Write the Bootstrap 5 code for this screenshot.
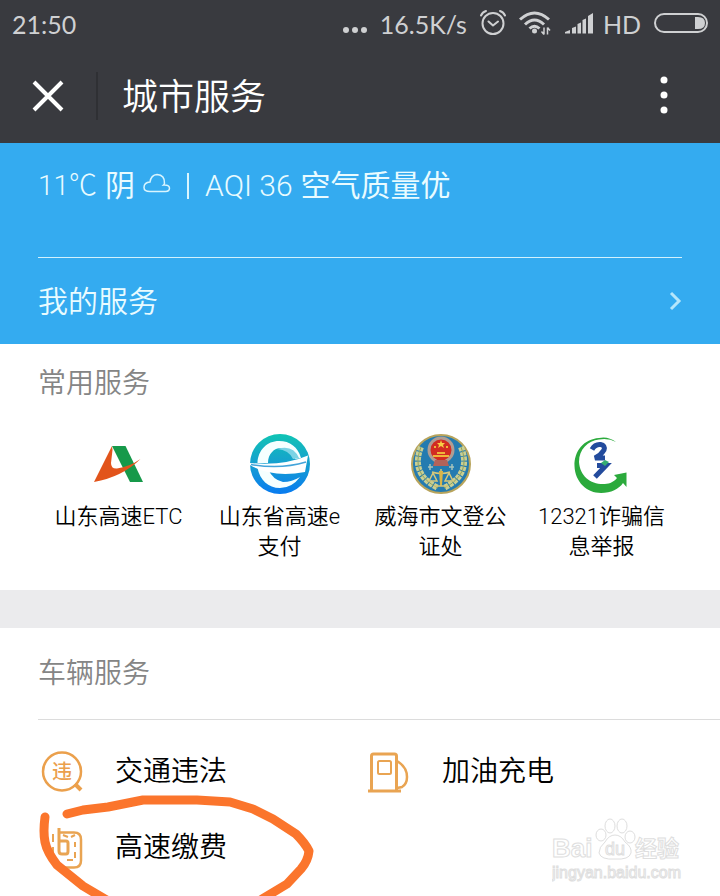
<!DOCTYPE html>
<html lang="zh-CN">
<head>
<meta charset="utf-8">
<meta name="viewport" content="width=device-width, initial-scale=1">
<title>城市服务</title>
<link href="https://cdn.jsdelivr.net/npm/bootstrap@5.3.0/dist/css/bootstrap.min.css" rel="stylesheet">
<style>
  body { font-family: Roboto, "Noto Sans CJK SC", sans-serif; font-weight: 350; color: #000; background: #fff; }
  svg { display: block; flex-shrink: 0; }
  .top-area { background: #393a3f; color: #fff; }
  .status-bar { height: 48px; padding: 0 12px; gap: 13px; font-family: Lato, sans-serif; font-size: 25px; font-weight: 400; line-height: 48px; color: #cfd0d2; }
  .title-bar { height: 95px; padding: 0 36px 0 32px; }
  .title-bar h1 { font-size: 36px; line-height: 44px; font-weight: 350; padding: 4px 0 0 24px; border-left: 2px solid #2f3034; }
  .icon-btn { background: none; border: 0; padding: 0; color: inherit; }
  .close-btn { width: 64px; }
  .blue-area { background: #34abf0; color: #e9fbff; padding: 0 38px; }
  .weather { height: 115px; padding-top: 22px; font-size: 28px; font-weight: 300; line-height: 42px; border-bottom: 1px solid #d3f1fd; }
  .weather .han { font-size: 30px; font-weight: 400; }
  .weather .aqi { font-size: 30px; }
  .weather .split { width: 2px; height: 26px; background: #d9f5fe; }
  .my-service { height: 86px; font-size: 30px; color: inherit; }
  .section-title { font-size: 28px; line-height: 42px; font-weight: 350; color: #858585; }
  .common { padding: 19px 38px 28px; }
  .common .tile { padding: 29px 12px 0; font-size: 22px; line-height: 30px; color: #000; }
  .gap-band { height: 38px; background: #ebebed; }
  .vehicle-head { padding: 25px 0 24px; margin-left: 38px; border-bottom: 1px solid #dcdcdc; }
  .vehicle-list { padding: 14px 28px 0 38px; }
  .vehicle-list .entry { height: 76px; font-size: 28px; color: #000; gap: 29px; }
  .hand-circle { left: 0; top: 12px; pointer-events: none; }
  .watermark { right: 36px; bottom: 12px; pointer-events: none; }
</style>
<script src="https://cdn.jsdelivr.net/npm/bootstrap@5.3.0/dist/js/bootstrap.bundle.min.js"></script>
</head>
<body class="min-vh-100 d-flex flex-column">

<header class="top-area">
  <div class="status-bar d-flex align-items-center">
    <span class="me-auto">21:50</span>
    <svg width="24" height="48" viewBox="0 0 24 48" fill="#cfd0d2"><circle cx="3" cy="30" r="3"/><circle cx="12" cy="30" r="3"/><circle cx="21" cy="30" r="3"/></svg>
    <span>16.5K/s</span>
    <svg width="26" height="48" viewBox="0 0 26 48" fill="none" stroke="#cfd0d2" stroke-width="2" stroke-linecap="round" stroke-linejoin="round"><circle cx="13" cy="23.500" r="10.500"/><path d="M8.500 21.500l4.500 4 5-4M1 15.500q1.500-3.500 5-4.500M25 15.500q-1.500-3.500-5-4.500"/></svg>
    <svg width="32" height="48" viewBox="0 0 32 48" fill="none" stroke="#cfd0d2" stroke-width="3"><path d="M1 19.500q14.500-13 29 0M6 24.500q9.500-9 19 0M10.500 28.500q5-4.500 10 0"/><circle cx="15.500" cy="31" r="2.500" fill="#cfd0d2" stroke="none"/><path stroke-width="1.500" d="M25 27.500v7M28.500 27.500v7M22.500 31.500l2.500 3M31 30.500l-2.500-3"/></svg>
    <span class="d-flex gap-2">
      <svg width="31" height="48" viewBox="0 0 31 48" fill="#cfd0d2"><path d="M1 33.500V32l5-2v3.500zM8 33.500V28l4-1.500v7zM13.500 33.500V24l3.500-1.500v11zM18.500 33.500V20l3.500-1.500v15zM24 33.500V16l5-3v20.500z"/></svg>
      <span>HD</span>
    </span>
    <svg width="54" height="48" viewBox="0 0 54 48"><rect x="1" y="14" width="52" height="18" rx="9" fill="none" stroke="#cfd0d2" stroke-width="2"/><path d="M41 17h3q7 0 7 6t-7 6h-3z" fill="#cfd0d2"/></svg>
  </div>
  <div class="title-bar d-flex align-items-center">
    <button class="icon-btn close-btn" type="button" aria-label="关闭">
      <svg width="32" height="32" viewBox="0 0 32 32" stroke="#fff" stroke-width="4"><path d="M2 2l28 28M30 2L2 30"/></svg>
    </button>
    <h1 class="m-0 me-auto">城市服务</h1>
    <button class="icon-btn" type="button" aria-label="更多">
      <svg width="40" height="40" viewBox="0 0 40 40" fill="#fff"><circle cx="20" cy="4" r="3.500"/><circle cx="20" cy="19" r="3.500"/><circle cx="20" cy="34" r="3.500"/></svg>
    </button>
  </div>
</header>

<section class="blue-area">
  <div class="weather d-flex align-items-start">
    <span>11℃</span>
    <span class="han ms-2">阴</span>
    <svg class="ms-2" width="28" height="42" viewBox="0 0 28 42" fill="none" stroke="#d9f5fe" stroke-width="1.500"><path d="M7 26.500q-6 0-6-4 0-5 6-5.500Q8 10 14 9.500q8 .5 7.500 9-.5 1-1 1.500 5.500-.5 6 3 0 3.500-4 3.500z"/></svg>
    <span class="split align-self-start mt-2 ms-3 me-3"></span>
    <span class="aqi">AQI 36</span>
    <span class="han ms-2">空气质量优</span>
  </div>
  <a class="my-service d-flex align-items-center justify-content-between text-decoration-none" href="#">
    <span>我的服务</span>
    <svg width="14" height="20" viewBox="0 0 14 20" fill="none" stroke="#b5e6fb" stroke-width="3"><path d="M3 2l8 8-8 8"/></svg>
  </a>
</section>

<section class="common">
  <h2 class="section-title m-0">常用服务</h2>
  <div class="row row-cols-4 g-0 text-center">
    <a class="col tile text-decoration-none" href="#">
      <svg class="mx-auto mb-2" width="60" height="60" viewBox="0 0 60 60"><path d="M23 12h13.500L54 48H41z" fill="#16994a"/><path d="M23 12L5 48Q33 43 51.500 25 40 33 28 34.500 22 35 22 29L23.500 16z" fill="#e2541b"/></svg>
      山东高速ETC
    </a>
    <a class="col tile text-decoration-none" href="#">
      <svg class="mx-auto mb-2" width="60" height="60" viewBox="0 0 60 60"><defs><linearGradient id="sea" x1="0" y1="0" x2="0" y2="1"><stop offset="0" stop-color="#10c4b4"/><stop offset=".5" stop-color="#169fd0"/><stop offset="1" stop-color="#087bf0"/></linearGradient></defs><circle cx="30" cy="30" r="30" fill="url(#sea)"/><path d="M7.500 29C8 16 17 7 29 7c11 0 19 6 22 17l-6 1C42 18 37 14 31 14c-7 0-13 6-13 15z" fill="#f5ffff"/><path d="M27 15q16-5 22 9l-6 1q-4-9-16-10z" fill="#7bd3e5"/><path d="M7.500 34C10 46 18 54 30 54q12 0 20-11-8 5-17 5-10-2-15-13z" fill="#f5ffff"/><path d="M0 29q34 3 58-7.500L55 38Q22 44 0 31z" fill="#fff"/><path d="M1 30.500q30 5 55-2.500" fill="none" stroke="#43a4da" stroke-width="1.500"/></svg>
      山东省高速e支付
    </a>
    <a class="col tile text-decoration-none" href="#">
      <svg class="mx-auto mb-2" width="60" height="60" viewBox="0 0 60 60"><circle cx="30" cy="30" r="29" fill="#247bb0" stroke="#b8a45c" stroke-width="2"/><path d="M10 13Q-1 40 27 54M50 13Q61 40 33 54" fill="none" stroke="#c9cf94" stroke-width="6" stroke-dasharray="4 1"/><path d="M10 13Q-1 40 27 54M50 13Q61 40 33 54" fill="none" stroke="#8ea160" stroke-width="1"/><circle cx="30" cy="16" r="12" fill="#d22c22" stroke="#b09d93" stroke-width="3"/><path d="M24 26h12l2 6H22z" fill="#b3635a"/><path d="M30 6l1 3h3l-2 2 1 3-3-2-3 2 1-3-2-2h3z" fill="#f7cf45"/><path d="M23 12h2v2h-2zM35 12h2v2h-2zM22 21h16v2H22zM26 18h8v2h-8z" fill="#efb53a"/><path d="M30 35v17M21 38q9 3 18 0M22 39l-4 8h8zM38 39l-4 8h8zM23 52h14" fill="none" stroke="#d5c77b" stroke-width="1.500"/><path d="M28 37h4l-1 14h-2z" fill="#d9b548"/><path d="M17 33h5M19 30v6M38 33h5M41 30v6" stroke="#a5c3bb" stroke-width="1.500"/></svg>
      威海市文登公证处
    </a>
    <a class="col tile text-decoration-none" href="#">
      <svg class="mx-auto mb-2" width="60" height="60" viewBox="0 0 60 60"><path d="M44 8Q36 2 27 4C12 5 2 17 2.500 32 3 48 15 59 29 59c10 0 18-4 22-10l3.500 4V38.500L42 41l3 3c-4 5-9 6-14 6C18 50 8 42 7 28 7 15 16 7 27 5.500Q37 4 44 8z" fill="#2baa3c"/><path d="M20 15.500q3-5.500 8.500-5 5 1 3.500 5.500-3 5-9 8h10" fill="none" stroke="#234b9d" stroke-width="5"/><path d="M25 31.500h9L23 43" fill="none" stroke="#234b9d" stroke-width="5"/><path d="M29 29l4-3 4 2-4 4z" fill="#35ad72"/></svg>
      12321诈骗信息举报
    </a>
  </div>
</section>

<div class="gap-band"></div>

<section class="flex-grow-1 d-flex flex-column">
  <div class="vehicle-head"><h2 class="section-title m-0">车辆服务</h2></div>
  <div class="vehicle-list flex-grow-1 position-relative overflow-hidden">
    <div class="row row-cols-2 g-0">
      <a class="col entry d-flex align-items-center text-decoration-none" href="#">
        <svg width="48" height="48" viewBox="0 0 48 48" fill="none" stroke="#eba04c" stroke-width="2.500"><circle cx="24" cy="23.500" r="19"/><path stroke-width="4" d="M37 36l6 6"/><text x="24" y="31" text-anchor="middle" font-size="20" font-weight="500" fill="#eba04c" stroke="none">违</text></svg>
        交通违法
      </a>
      <a class="col entry d-flex align-items-center text-decoration-none" href="#">
        <svg width="48" height="48" viewBox="0 0 48 48" fill="none" stroke="#e9a452" stroke-width="3"><path d="M6.500 43V8q0-2 2-2h21q2 0 2 2v35M3 43h33"/><rect x="13" y="13" width="13" height="13" rx="1.500" stroke-width="2"/><path d="M32 13q10 6 10 16 0 7-5 10l-5 1" stroke-width="2.500"/></svg>
        加油充电
      </a>
      <a class="col entry d-flex align-items-center text-decoration-none" href="#">
        <svg width="48" height="48" viewBox="0 0 48 48" fill="none" stroke="#e9a452" stroke-width="2.500"><path d="M20 8.500h16q7 0 7 7v21q0 7-7 7H22"/><path d="M21 4v23q0 3 3 3h4q2 0 2-3v-8q0-2-2-2h-7" stroke-width="3"/><path d="M15 10v8M15 23v8M25 11l5 2M33 13l4-2M37 18v5M37 28v6M29 36h6" stroke-width="2"/></svg>
        高速缴费
      </a>
    </div>
    <svg class="hand-circle position-absolute" width="330" height="180" viewBox="0 733 330 180" fill="none" stroke="#fb752c" stroke-width="9" stroke-linecap="round" stroke-linejoin="round"><path d="M67 815L83 811 108 808 143 801H197L230 803 253 810 273 820 296 835Q305 844 309 852 308 862 301 870L287 885 262 900"/><path d="M45 818Q43 833 45 843 47 853 57 866L83 887 110 903"/></svg>
    <svg class="watermark position-absolute" width="132" height="66" viewBox="0 0 132 66" fill="#fff" stroke="#dedede" stroke-width="1" font-family="Liberation Sans, Noto Sans CJK SC, sans-serif"><text x="0" y="39" font-size="26" font-weight="700">Bai</text><ellipse cx="49" cy="17" rx="5" ry="6"/><ellipse cx="58" cy="8" rx="5" ry="7"/><ellipse cx="70" cy="8" rx="5" ry="7"/><ellipse cx="78" cy="19" rx="5" ry="6"/><path d="M63 17q6 0 10 7 7 5 6 11-2 7-16 6-14 1-16-6 0-6 6-11 4-7 10-7z"/><text x="63" y="37" font-size="18" font-weight="400" text-anchor="middle">du</text><text x="83" y="38" font-size="22" font-weight="700">经验</text><text x="0" y="60" font-size="16" font-weight="400">jingyan.baidu.com</text></svg>
  </div>
</section>

</body>
</html>
